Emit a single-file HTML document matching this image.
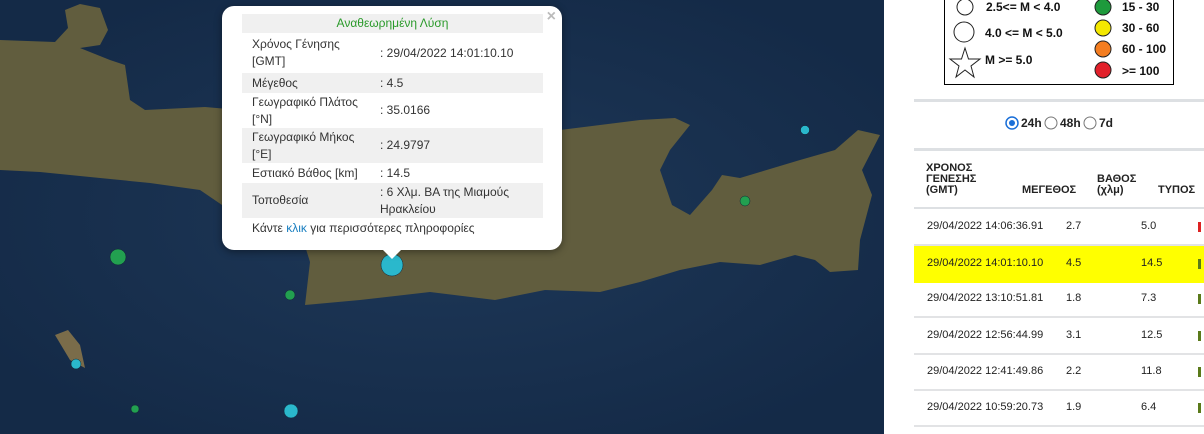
<!DOCTYPE html>
<html><head><meta charset="utf-8"><style>
body{margin:0;width:1204px;height:434px;overflow:hidden;position:relative;font-family:"Liberation Sans",Arial,sans-serif;background:#fff}
#map{position:absolute;left:0;top:0;width:884px;height:434px;background:#1b3150}
.pop{position:absolute;left:222px;top:6px;width:340px;height:244px;background:#fff;border-radius:12px;box-shadow:0 2px 8px rgba(0,0,0,.4)}
.pop table{position:absolute;left:20px;top:8px;width:301px;border-collapse:collapse;font-size:12px;color:#333}
.pop td{padding:0 0 0 10px;line-height:17px;vertical-align:middle}
.g{background:#f0f0f0}
.x{position:absolute;right:6px;top:2px;color:#bbb;font-size:16px;font-weight:bold}
.tip{position:absolute;left:382px;top:249px;width:0;height:0;border-left:10px solid transparent;border-right:10px solid transparent;border-top:10px solid #fff}
.r{position:absolute;font-size:11px;color:#222}
.sep{position:absolute;left:914px;width:290px;background:#dde0e3}
.row{position:absolute;left:914px;width:290px;height:35px;border-bottom:2px solid #e2e3e5;font-size:11px;color:#222}
.row span{position:absolute;top:11px}
.mk{position:absolute;left:284px;top:13px;width:3px;height:10px;background:#5a7a1a}
</style></head><body>
<div id="map">
<svg width="884" height="434" style="position:absolute;left:0;top:0">
<defs><radialGradient id="s" cx="50%" cy="50%" r="60%"><stop offset="0" stop-color="#1e3858"/><stop offset="1" stop-color="#142a47"/></radialGradient></defs>
<rect width="884" height="434" fill="url(#s)"/>
<path d="M0,40 L55,42 L68,28 L65,10 L80,4 L100,8 L108,30 L100,45 L80,48 L110,60 L125,65 L130,100 L145,110 L205,107 L240,110 L400,110 L560,130 L600,125 L640,120 L675,118 L690,125 L670,150 L660,170 L672,205 L690,215 L712,190 L722,175 L740,178 L760,172 L800,160 L835,150 L858,130 L880,135 L862,170 L872,195 L860,240 L858,270 L830,272 L815,260 L795,255 L760,265 L720,262 L680,270 L640,282 L600,292 L545,290 L495,300 L430,292 L360,300 L305,305 L310,262 L300,230 L240,210 L222,205 L200,190 L150,183 L100,178 L40,172 L0,170 Z" fill="#615d3e"/>
<path d="M55,335 L68,330 L80,345 L85,368 L70,360 Z" fill="#7a6c4a"/>
<g stroke="#123" stroke-width=".5">
<circle cx="118" cy="257" r="8" fill="#22a050"/>
<circle cx="290" cy="295" r="5" fill="#22a050"/>
<circle cx="745" cy="201" r="5" fill="#22a050"/>
<circle cx="135" cy="409" r="4" fill="#22a050"/>
<circle cx="392" cy="265" r="11" fill="#2ab8cc"/>
<circle cx="805" cy="130" r="4.5" fill="#2ab8cc"/>
<circle cx="76" cy="364" r="5" fill="#2ab8cc"/>
<circle cx="291" cy="411" r="7" fill="#2ab8cc"/>
</g></svg>
<div class="pop"><span class="x">×</span>
<table>
<tr class="g"><td colspan="2" style="text-align:center;color:#2a9a2a;height:19px;padding:0">Αναθεωρημένη Λύση</td></tr>
<tr style="height:40px"><td style="width:128px">Χρόνος Γένησης<br>[GMT]</td><td style="padding-left:0">: 29/04/2022 14:01:10.10</td></tr>
<tr class="g" style="height:20px"><td>Μέγεθος</td><td style="padding-left:0">: 4.5</td></tr>
<tr style="height:35px"><td>Γεωγραφικό Πλάτος<br>[°N]</td><td style="padding-left:0">: 35.0166</td></tr>
<tr class="g" style="height:35px"><td>Γεωγραφικό Μήκος<br>[°E]</td><td style="padding-left:0">: 24.9797</td></tr>
<tr style="height:20px"><td>Εστιακό Βάθος [km]</td><td style="padding-left:0">: 14.5</td></tr>
<tr class="g" style="height:35px"><td>Τοποθεσία</td><td style="padding-left:0">: 6 Χλμ. ΒΑ της Μιαμούς<br>Ηρακλείου</td></tr>
<tr style="height:20px"><td colspan="2">Κάντε <span style="color:#1a7fc0">κλικ</span> για περισσότερες πληροφορίες</td></tr>
</table></div>
<div class="tip"></div>
</div>
<div style="position:absolute;left:944px;top:-2px;width:228px;height:86px;border:1px solid #000;border-top:none"></div>
<svg width="320" height="90" style="position:absolute;left:884px;top:0">
<g stroke="#222" fill="#fff"><circle cx="81" cy="7" r="8"/><circle cx="80" cy="32" r="10"/>
<path d="M81,48 L84.5,59 L96,59 L87,66 L90,77 L81,70 L72,77 L75,66 L66,59 L77.5,59 Z"/></g>
<g stroke="#222"><circle cx="219" cy="7" r="8" fill="#1e9a3c"/><circle cx="219" cy="28" r="8" fill="#f4e800"/><circle cx="219" cy="49" r="8" fill="#f47d20"/><circle cx="219" cy="70" r="8" fill="#e2202a"/></g>
<g font-size="12" font-weight="bold" font-family="Liberation Sans,sans-serif" fill="#111">
<text x="102" y="11">2.5&lt;= M &lt; 4.0</text><text x="101" y="37">4.0 &lt;= M &lt; 5.0</text><text x="101" y="64">M &gt;= 5.0</text>
<text x="238" y="11">15 - 30</text><text x="238" y="32">30 - 60</text><text x="238" y="53">60 - 100</text><text x="238" y="75">&gt;= 100</text></g>
</svg>
<div class="sep" style="top:99px;height:3px"></div>
<svg width="140" height="16" style="position:absolute;left:1004px;top:115px">
<circle cx="8" cy="8" r="6" fill="#fff" stroke="#1a6fd8" stroke-width="1.5"/><circle cx="8" cy="8" r="3" fill="#1a6fd8"/>
<circle cx="47" cy="8" r="6" fill="#fff" stroke="#777"/><circle cx="86" cy="8" r="6" fill="#fff" stroke="#777"/>
<g font-size="12" font-weight="bold" font-family="Liberation Sans,sans-serif" fill="#222"><text x="17" y="12">24h</text><text x="56" y="12">48h</text><text x="95" y="12">7d</text></g></svg>
<div class="sep" style="top:148px;height:3px"></div>
<div class="r" style="left:926px;top:163px;font-weight:bold;font-size:11px;line-height:11px">ΧΡΟΝΟΣ<br>ΓΕΝΕΣΗΣ<br>(GMT)</div>
<div class="r" style="left:1022px;top:184px;font-weight:bold;font-size:11px">ΜΕΓΕΘΟΣ</div>
<div class="r" style="left:1097px;top:174px;font-weight:bold;font-size:11px;line-height:11px">ΒΑΘΟΣ<br>(χλμ)</div>
<div class="r" style="left:1158px;top:184px;font-weight:bold;font-size:11px">ΤΥΠΟΣ</div>
<div class="sep" style="top:207px;height:2px"></div>
<div class="row" style="top:209px"><span style="left:13px">29/04/2022 14:06:36.91</span><span style="left:152px">2.7</span><span style="left:227px">5.0</span><i class="mk" style="background:#d22"></i></div>
<div class="row" style="top:246px;background:#ffff00;border-bottom-color:#ffff00;height:35px"><span style="left:13px">29/04/2022 14:01:10.10</span><span style="left:152px">4.5</span><span style="left:227px">14.5</span><i class="mk"></i></div>
<div class="row" style="top:281px"><span style="left:13px">29/04/2022 13:10:51.81</span><span style="left:152px">1.8</span><span style="left:227px">7.3</span><i class="mk"></i></div>
<div class="row" style="top:318px"><span style="left:13px">29/04/2022 12:56:44.99</span><span style="left:152px">3.1</span><span style="left:227px">12.5</span><i class="mk"></i></div>
<div class="row" style="top:354px"><span style="left:13px">29/04/2022 12:41:49.86</span><span style="left:152px">2.2</span><span style="left:227px">11.8</span><i class="mk"></i></div>
<div class="row" style="top:390px"><span style="left:13px">29/04/2022 10:59:20.73</span><span style="left:152px">1.9</span><span style="left:227px">6.4</span><i class="mk"></i></div>
</body></html>
